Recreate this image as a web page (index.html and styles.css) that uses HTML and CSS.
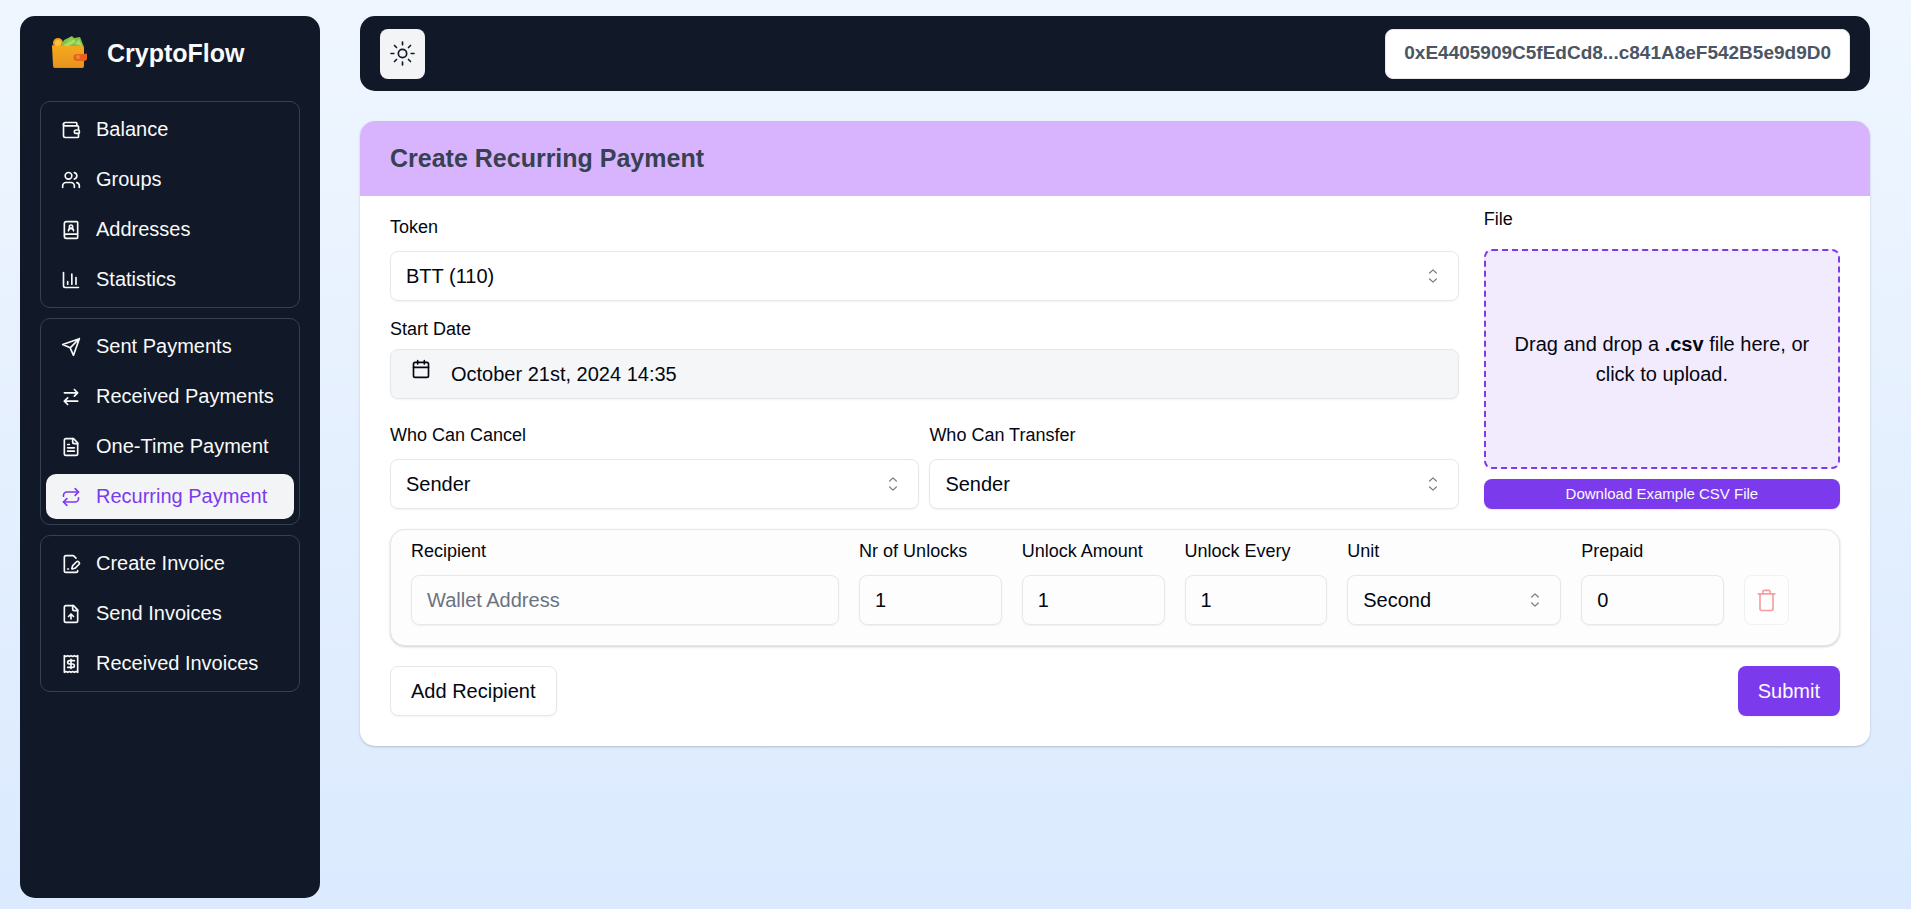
FILE: index.html
```html
<!DOCTYPE html>
<html lang="en">
<head>
<meta charset="utf-8">
<meta name="viewport" content="width=device-width, initial-scale=1">
<title>CryptoFlow</title>
<link rel="stylesheet" href="styles.css">
</head>
<body>
<div class="app">
  <aside class="sidebar">
    <div class="brand">
      <svg class="brand-logo" viewBox="0 0 36 36" aria-hidden="true">
        <defs>
          <linearGradient id="leather" x1="0" y1="0" x2="0" y2="1">
            <stop offset="0" stop-color="#f4ab1c"/>
            <stop offset="1" stop-color="#e8931f"/>
          </linearGradient>
        </defs>
        <circle cx="7" cy="8" r="5" fill="#f0a020"/>
        <circle cx="7" cy="8" r="3" fill="#f9c03c"/>
        <path d="M9 12 13 5l8-4 2 2 6-1 4 10z" fill="#7cc142"/>
        <path d="m12 10 11-6 2 3-9 5zM24 9l4-5 3 7z" fill="#a5dc6a"/>
        <path d="m15 6 6-4 1 2-6 3z" fill="#8fce55"/>
        <path d="M1 11q0-2 2 0h28q2 0 2 2v17q0 3-3 3H5q-3 0-3-3z" fill="url(#leather)"/>
        <path d="M2 29q0 3 3 3h25q3 0 3-3v2q0 2-3 2H5q-3 0-3-2z" fill="#d98a1c"/>
        <path d="M26 19h8q2-2 2 1v3q0 3-3 3h-7a3.500 3.500 0 0 1 0-7z" fill="#e8621f"/>
        <circle cx="27" cy="22" r="2" fill="#f08a35"/>
      </svg>
      <span class="brand-name">CryptoFlow</span>
    </div>
    <nav class="nav" aria-label="Main">
      <div class="nav-group">
        <a class="nav-item" href="#"><svg class="icon" viewBox="0 0 24 24"><path d="M19 7V4a1 1 0 0 0-1-1H5a2 2 0 0 0 0 4h15a1 1 0 0 1 1 1v4h-3a2 2 0 0 0 0 4h3a1 1 0 0 0 1-1v-2a1 1 0 0 0-1-1"/><path d="M3 5v14a2 2 0 0 0 2 2h15a1 1 0 0 0 1-1v-4"/></svg><span class="nav-text">Balance</span></a>
        <a class="nav-item" href="#"><svg class="icon" viewBox="0 0 24 24"><path d="M16 21v-2a4 4 0 0 0-4-4H6a4 4 0 0 0-4 4v2"/><circle cx="9" cy="7" r="4"/><path d="M22 21v-2a4 4 0 0 0-3-3.870M16 3.130a4 4 0 0 1 0 7.750"/></svg><span class="nav-text">Groups</span></a>
        <a class="nav-item" href="#"><svg class="icon" viewBox="0 0 24 24"><path d="M15 13a3 3 0 1 0-6 0"/><path d="M4 19.500v-15A2.500 2.500 0 0 1 6.500 2H19a1 1 0 0 1 1 1v18a1 1 0 0 1-1 1H6.500a1 1 0 0 1 0-5H20"/><circle cx="12" cy="8" r="2"/></svg><span class="nav-text">Addresses</span></a>
        <a class="nav-item" href="#"><svg class="icon" viewBox="0 0 24 24"><path d="M3 3v16a2 2 0 0 0 2 2h16M18 17V9M13 17V5M8 17v-3"/></svg><span class="nav-text">Statistics</span></a>
      </div>
      <div class="nav-group">
        <a class="nav-item" href="#"><svg class="icon" viewBox="0 0 24 24"><path d="m22 2-7 20-4-9-9-4ZM22 2 11 13"/></svg><span class="nav-text">Sent Payments</span></a>
        <a class="nav-item" href="#"><svg class="icon" viewBox="0 0 24 24"><path d="m16 3 4 4-4 4M20 7H4M8 21l-4-4 4-4M4 17h16"/></svg><span class="nav-text">Received Payments</span></a>
        <a class="nav-item" href="#"><svg class="icon" viewBox="0 0 24 24"><path d="M15 2H6a2 2 0 0 0-2 2v16a2 2 0 0 0 2 2h12a2 2 0 0 0 2-2V7Z"/><path d="M14 2v4a2 2 0 0 0 2 2h4M10 9H8M16 13H8M16 17H8"/></svg><span class="nav-text">One-Time Payment</span></a>
        <a class="nav-item nav-item-active" href="#" aria-current="page"><svg class="icon" viewBox="0 0 24 24"><path d="m17 2 4 4-4 4"/><path d="M3 11v-1a4 4 0 0 1 4-4h14M7 22l-4-4 4-4"/><path d="M21 13v1a4 4 0 0 1-4 4H3"/></svg><span class="nav-text">Recurring Payment</span></a>
      </div>
      <div class="nav-group">
        <a class="nav-item" href="#"><svg class="icon" viewBox="0 0 24 24"><path d="m18 5-2.414-2.414A2 2 0 0 0 14.172 2H6a2 2 0 0 0-2 2v16a2 2 0 0 0 2 2h12a2 2 0 0 0 2-2"/><path d="M21.378 12.626a1 1 0 0 0-3.004-3.004l-4.010 4.012a2 2 0 0 0-.506.854l-.837 2.870a.5.5 0 0 0 .62.62l2.870-.837a2 2 0 0 0 .854-.506zM8 18h1"/></svg><span class="nav-text">Create Invoice</span></a>
        <a class="nav-item" href="#"><svg class="icon" viewBox="0 0 24 24"><path d="M15 2H6a2 2 0 0 0-2 2v16a2 2 0 0 0 2 2h12a2 2 0 0 0 2-2V7Z"/><path d="M14 2v4a2 2 0 0 0 2 2h4M12 12v6M15 15l-3-3-3 3"/></svg><span class="nav-text">Send Invoices</span></a>
        <a class="nav-item" href="#"><svg class="icon" viewBox="0 0 24 24"><path d="M4 2v20l2-1 2 1 2-1 2 1 2-1 2 1 2-1 2 1V2l-2 1-2-1-2 1-2-1-2 1-2-1-2 1Z"/><path d="M16 8h-6a2 2 0 1 0 0 4h4a2 2 0 1 1 0 4H8M12 17.500v-11"/></svg><span class="nav-text">Received Invoices</span></a>
      </div>
    </nav>
  </aside>

  <main class="main">
    <header class="topbar">
      <button class="theme-toggle" type="button" aria-label="Toggle theme">
        <svg class="icon-large" viewBox="0 0 15 15"><circle cx="7.500" cy="7.500" r="2.500"/><path d="M7.500.6v1.700M7.500 12.700v1.700M.6 7.500h1.700M12.700 7.500h1.700M2.700 2.700l1.200 1.200M11.100 11.100l1.200 1.200M12.300 2.700l-1.200 1.200M3.900 11.100l-1.200 1.200"/></svg>
      </button>
      <button class="account" type="button">0xE4405909C5fEdCd8...c841A8eF542B5e9d9D0</button>
    </header>

    <section class="card">
      <h1 class="card-header">Create Recurring Payment</h1>
      <form class="card-body">
        <div class="settings">
          <div class="settings-fields">
            <div class="field">
              <label class="label" for="token">Token</label>
              <div class="select">
                <select class="control" id="token"><option>BTT (110)</option></select>
                <svg class="caret" viewBox="0 0 15 15"><path d="M5 5.300l2.500-2.400L10 5.300M5 9.700l2.500 2.400L10 9.700"/></svg>
              </div>
            </div>
            <div class="field field-date">
              <label class="label" for="start">Start Date</label>
              <button class="control date" id="start" type="button">
                <svg class="icon date-icon" viewBox="0 0 24 24"><path d="M8 2v4M16 2v4"/><rect x="3" y="4" width="18" height="18" rx="2"/><path d="M3 10h18"/></svg>
                October 21st, 2024 14:35
              </button>
            </div>
            <div class="field-pair">
              <div class="field">
                <label class="label" for="cancel">Who Can Cancel</label>
                <div class="select">
                  <select class="control" id="cancel"><option>Sender</option></select>
                  <svg class="caret" viewBox="0 0 15 15"><path d="M5 5.300l2.500-2.400L10 5.300M5 9.700l2.500 2.400L10 9.700"/></svg>
                </div>
              </div>
              <div class="field">
                <label class="label" for="transfer">Who Can Transfer</label>
                <div class="select">
                  <select class="control" id="transfer"><option>Sender</option></select>
                  <svg class="caret" viewBox="0 0 15 15"><path d="M5 5.300l2.500-2.400L10 5.300M5 9.700l2.500 2.400L10 9.700"/></svg>
                </div>
              </div>
            </div>
          </div>
          <div class="upload">
            <label class="label" for="file">File</label>
            <label class="dropzone" for="file">
              <span>Drag and drop a <b>.csv</b> file here, or click to upload.</span>
            </label>
            <input id="file" type="file" accept=".csv" hidden>
            <button class="download" type="button">Download Example CSV File</button>
          </div>
        </div>

        <div class="recipient">
          <div class="field">
            <label class="label" for="wallet">Recipient</label>
            <input class="control" id="wallet" type="text" placeholder="Wallet Address">
          </div>
          <div class="field">
            <label class="label" for="unlocks">Nr of Unlocks</label>
            <input class="control" id="unlocks" type="text" inputmode="numeric" value="1">
          </div>
          <div class="field">
            <label class="label" for="amount">Unlock Amount</label>
            <input class="control" id="amount" type="text" inputmode="numeric" value="1">
          </div>
          <div class="field">
            <label class="label" for="every">Unlock Every</label>
            <input class="control" id="every" type="text" inputmode="numeric" value="1">
          </div>
          <div class="field">
            <label class="label" for="unit">Unit</label>
            <div class="select">
              <select class="control" id="unit"><option>Second</option></select>
              <svg class="caret" viewBox="0 0 15 15"><path d="M5 5.300l2.500-2.400L10 5.300M5 9.700l2.500 2.400L10 9.700"/></svg>
            </div>
          </div>
          <div class="field">
            <label class="label" for="prepaid">Prepaid</label>
            <input class="control" id="prepaid" type="text" inputmode="numeric" value="0">
          </div>
          <button class="remove" type="button" aria-label="Remove recipient" disabled>
            <svg class="icon-large" viewBox="0 0 15 15"><path d="M2.500 3.500h10M5.300 3.500V2.300q0-.9.9-.9h2.600q.9 0 .9.9v1.200M3.600 3.500v9q0 1 1 1h5.800q1 0 1-1v-9"/></svg>
          </button>
        </div>

        <div class="actions">
          <button class="button" type="button">Add Recipient</button>
          <button class="button button-primary" type="submit">Submit</button>
        </div>
      </form>
    </section>
  </main>
</div>
</body>
</html>
```
FILE: styles.css
```css
*,
*::before,
*::after {
  box-sizing: border-box;
}

body {
  margin: 0;
  min-height: 100vh;
  background: linear-gradient(to bottom, #eff6ff, #dbeafe);
  color: #030712;
  font-family: "Liberation Sans", Arial, sans-serif;
  font-size: 20px;
  line-height: 30px;
}

button,
input,
select {
  margin: 0;
  font: inherit;
  color: inherit;
}

button,
select {
  cursor: pointer;
}

.app {
  display: flex;
  gap: 40px;
  min-height: 100vh;
  padding: 16px 41px 11px 20px;
}

.icon,
.icon-large {
  flex: none;
  width: 20px;
  height: 20px;
  fill: none;
  stroke: currentColor;
  stroke-width: 2;
  stroke-linecap: round;
  stroke-linejoin: round;
}

.icon-large {
  width: 25px;
  height: 25px;
  stroke-width: 1;
}

/* Sidebar */

.sidebar {
  flex: none;
  width: 300px;
  padding: 20px;
  border-radius: 15px;
  background: #111827;
  color: #f9fafb;
}

.brand {
  display: flex;
  align-items: center;
  gap: 20px;
  height: 33px;
  margin-bottom: 32px;
  padding-left: 11px;
}

.brand-logo {
  width: 36px;
  height: 36px;
}

.brand-name {
  font-size: 25px;
  font-weight: 700;
}

.nav {
  display: flex;
  flex-direction: column;
  gap: 10px;
}

.nav-group {
  display: flex;
  flex-direction: column;
  gap: 5px;
  padding: 5px;
  border: 1px solid #374151;
  border-radius: 10px;
}

.nav-item {
  display: flex;
  align-items: center;
  gap: 15px;
  height: 45px;
  padding: 0 15px;
  border-radius: 10px;
  color: inherit;
  text-decoration: none;
  white-space: nowrap;
}

.nav-text {
  padding-bottom: 2px;
}

.nav-item-active {
  background: #f3f4f6;
  color: #7c3aed;
}

/* Top bar */

.main {
  flex: 1;
  min-width: 0;
}

.topbar {
  display: flex;
  align-items: center;
  justify-content: space-between;
  height: 75px;
  margin-bottom: 30px;
  padding: 0 20px;
  border-radius: 15px;
  background: #111827;
}

.theme-toggle {
  display: grid;
  place-items: center;
  width: 45px;
  height: 50px;
  padding: 0;
  border: 0;
  border-radius: 8px;
  background: #f3f4f6;
  color: #111827;
}

.account {
  height: 50px;
  padding: 0 18px 2px;
  border: 1px solid #e5e7eb;
  border-radius: 8px;
  background: #fff;
  color: #4b5563;
  font-size: 19px;
  font-weight: 700;
}

/* Payment card */

.card {
  overflow: hidden;
  border-radius: 15px;
  background: #fff;
  box-shadow: 0 1px 3px rgba(0, 0, 0, 0.1), 0 1px 2px rgba(0, 0, 0, 0.1);
}

.card-header {
  margin: 0;
  padding: 20px 30px;
  background: #d8b4fe;
  color: #374151;
  font-size: 25px;
  line-height: 35px;
}

.card-body {
  display: flex;
  flex-direction: column;
  gap: 20px;
  padding: 0 30px 30px;
}

.settings {
  display: grid;
  grid-template-columns: 3fr 1fr;
  gap: 25px;
}

.settings-fields {
  display: flex;
  flex-direction: column;
  padding-top: 20px;
}

.field {
  display: flex;
  flex-direction: column;
  gap: 13px;
  min-width: 0;
}

.field-date {
  gap: 9px;
  margin: 17px 0 25px;
}

.field-pair {
  display: grid;
  grid-template-columns: 1fr 1fr;
  gap: 10px;
}

.label {
  font-size: 18px;
  line-height: 22px;
  white-space: nowrap;
}

.control {
  display: block;
  width: 100%;
  height: 50px;
  padding: 0 15px;
  border: 1px solid #e5e7eb;
  border-radius: 8px;
  outline: 0;
  background: transparent;
  box-shadow: 0 1px 2px rgba(0, 0, 0, 0.05);
  appearance: none;
}

.control::placeholder {
  color: #6b7280;
  opacity: 1;
}

.select {
  position: relative;
}

.caret {
  position: absolute;
  top: 15px;
  right: 16px;
  width: 20px;
  height: 20px;
  fill: none;
  stroke: #818181;
  stroke-linecap: round;
  stroke-linejoin: round;
  pointer-events: none;
}

.date {
  display: flex;
  align-items: center;
  gap: 20px;
  padding: 0 20px;
  background: #f5f6f8;
}

.date-icon {
  margin-bottom: 10px;
}

.upload {
  display: flex;
  flex-direction: column;
  padding-top: 12px;
}

.dropzone {
  display: flex;
  flex: 1;
  align-items: center;
  justify-content: center;
  margin: 19px 0 10px;
  padding: 20px;
  border: 2px dashed #7c3aed;
  border-radius: 8px;
  background: #f2ebfd;
  text-align: center;
  cursor: pointer;
}

.download {
  height: 30px;
  padding: 0;
  border: 0;
  border-radius: 8px;
  background: #7c3aed;
  box-shadow: 0 1px 2px rgba(0, 0, 0, 0.1);
  color: #f9fafb;
  font-size: 15px;
}

.recipient {
  display: grid;
  grid-template-columns: 6fr 2fr 2fr 2fr 3fr 2fr 75px;
  align-items: end;
  gap: 20px;
  padding: 10px 20px 20px;
  border: 1px solid #e5e7eb;
  border-radius: 15px;
  background: #fdfdfd;
  box-shadow: 0 1px 3px rgba(0, 0, 0, 0.1), 0 1px 2px rgba(0, 0, 0, 0.1);
}

.remove {
  display: grid;
  place-items: center;
  width: 45px;
  height: 50px;
  padding: 0;
  border: 1px solid #e5e7eb;
  border-radius: 8px;
  background: #fff;
  color: #ef4444;
  opacity: 0.5;
}

.actions {
  display: flex;
  justify-content: space-between;
}

.button {
  height: 50px;
  padding: 0 20px;
  border: 1px solid #e5e7eb;
  border-radius: 8px;
  background: #fff;
  box-shadow: 0 1px 2px rgba(0, 0, 0, 0.05);
}

.button-primary {
  border: 0;
  background: #7c3aed;
  color: #f9fafb;
}
```
